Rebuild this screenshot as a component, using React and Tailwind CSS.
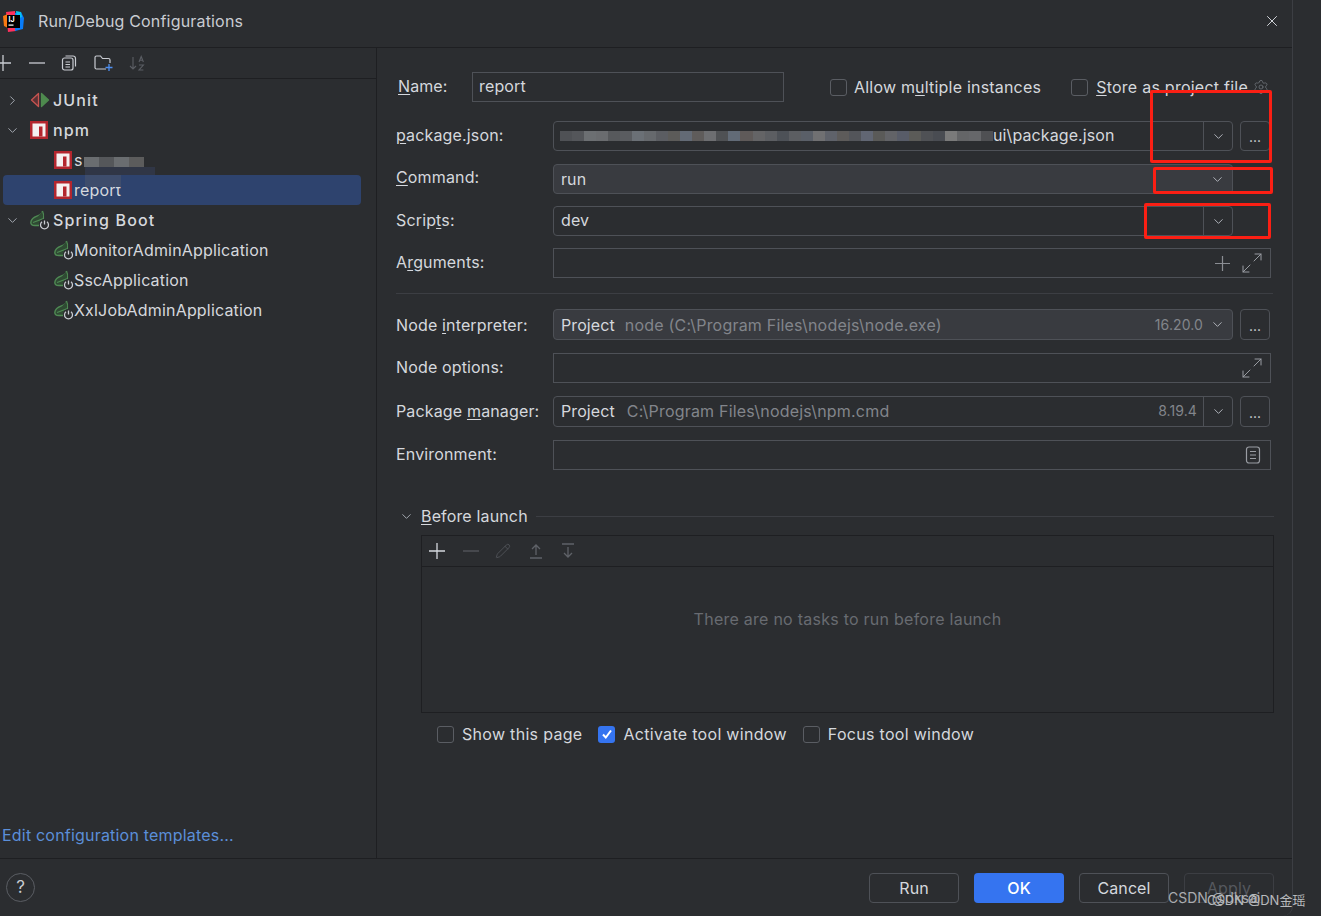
import { X, ChevronDown, ChevronRight, Settings, Maximize2, Pencil } from 'lucide-react';

const ui = "font-['Inter','Liberation_Sans',sans-serif]";

// pixelated patch that hides the path in the package.json field
const pathMosaic = ['#4f5155', '#54565a', '#6c6f72', '#6a6c6f', '#57595c', '#5a5c60', '#6b7076', '#66696d', '#5b5d62', '#5c5b59', '#636a75', '#5f5c5b', '#6d6e71', '#4f5154', '#626b77', '#5f5a59', '#646466', '#5c5e62', '#4d5157', '#5c5e62', '#5a5f68', '#707072', '#5f626a', '#5d5b5a', '#53555a', '#616673', '#5a5a58', '#626367', '#585c68', '#5b5b58', '#4f5155', '#494c52', '#7a7a7a', '#646567', '#66676a', '#4f5053'];

function LinePlus({ size = 16, color = '#c9ccd2', className = '' }) {
    return (
        <svg width={size} height={size} viewBox="0 0 16 16" fill="none" stroke={color} strokeWidth="1.300" className={`shrink-0 ${className}`}>
            <path d="M8 0v16M0 8h16" />
        </svg>
    );
}

function LineMinus({ color = '#c9ccd2', className = '' }) {
    return (
        <svg width="16" height="16" viewBox="0 0 16 16" fill="none" stroke={color} strokeWidth="1.300" className={`shrink-0 ${className}`}>
            <path d="M0 8h16" />
        </svg>
    );
}

function NpmIcon() {
    return (
        <svg width="18" height="18" viewBox="0 0 18 18" className="shrink-0">
            <rect width="18" height="18" fill="#b3262e" />
            <rect x="2.500" y="2.500" width="13" height="13" fill="#f4f1f1" />
            <rect x="9" y="5.500" width="3.500" height="10" fill="#b3262e" />
        </svg>
    );
}

function JunitIcon() {
    return (
        <svg width="20" height="16" viewBox="0 0 20 16" fill="none" className="shrink-0">
            <path d="M8.500 1.500 1.500 8l7 6.500z" fill="#5b3034" stroke="#c75450" strokeWidth="1.300" strokeLinejoin="round" />
            <path d="M11.500 1.500 18.500 8l-7 6.500z" fill="#4e8a4e" stroke="#4e8a4e" strokeWidth="1.300" strokeLinejoin="round" />
        </svg>
    );
}

function SpringIcon() {
    return (
        <svg width="20" height="20" viewBox="0 0 20 20" fill="none" className="shrink-0">
            <path d="M12.500 1C12 4 10 5 7.500 5.800 4 7 1 9.500.8 12.500c0 2 1.700 3 4 3H9" fill="#2f4a33" stroke="#4f8a54" strokeWidth="1.400" />
            <path d="M12.500 1c1 2 1.500 4.500 1 7.500L3 12.500" fill="#2f4a33" stroke="#4f8a54" strokeWidth="1.200" />
            <circle cx="14.500" cy="14.500" r="5.500" fill="#2b2d30" />
            <path d="M12 11.800a4 4 0 1 0 5 0" stroke="#c9ccd2" strokeWidth="1.300" />
            <path d="M14.500 10.500v4" stroke="#c9ccd2" strokeWidth="1.300" />
        </svg>
    );
}

function TreeRow({ icon, label, chevron, indent, bold, selected }) {
    return (
        <div className={`relative flex items-center h-[30px] ${indent ? 'pl-[54px]' : 'pl-[30px]'}`}>
            {selected && <div className="absolute left-[3px] right-[15px] top-0 bottom-0 rounded-[4px] bg-[#2e436e]" />}
            {chevron === 'right' && <ChevronRight size={15} strokeWidth={1.5} className="absolute left-[5px] text-[#a8adb5]" />}
            {chevron === 'down' && <ChevronDown size={15} strokeWidth={1.5} className="absolute left-[5px] text-[#a8adb5]" />}
            <span className="relative flex items-center">
                <span className={`flex items-center ${indent ? 'w-[20px]' : 'w-[23px]'}`}>{icon}</span>
                <span className={`text-[16px] text-[#d5d8dd] ${bold ? 'tracking-[1.15px] font-medium' : 'tracking-[0.18px]'}`}>{label}</span>
            </span>
        </div>
    );
}

function Sidebar() {
    return (
        <aside className="w-[377px] shrink-0 border-r border-[#1e1f22] flex flex-col">
            <div className="h-[31px] border-b border-[#1e1f22] flex items-center text-[#c9ccd2] overflow-hidden">
                <LinePlus className="-ml-[5px]" />
                <LineMinus className="ml-[18px]" />
                <svg width="16" height="16" viewBox="0 0 16 16" fill="none" stroke="#c9ccd2" strokeWidth="1.200" className="ml-[16px] shrink-0">
                    <rect x="1.500" y="3" width="10.500" height="12" rx="2" />
                    <path d="M4.500 1h7.500a2.500 2.500 0 0 1 2.500 2.500v8" />
                    <path d="M4.500 7h4.500M4.500 9.500h4.500M4.500 12h4.500" />
                </svg>
                <svg width="20" height="18" viewBox="0 0 20 18" fill="none" className="ml-[17px] shrink-0">
                    <path d="M1 14V3.500A1.500 1.500 0 0 1 2.500 2h4l2 2.500h6A1.500 1.500 0 0 1 16 6v3M12 15H2.500A1.500 1.500 0 0 1 1 13.500" stroke="#c9ccd2" strokeWidth="1.200" />
                    <path d="M15 10v7M11.500 13.500h7" stroke="#4d8ef0" strokeWidth="1.300" />
                </svg>
                <svg width="18" height="18" viewBox="0 0 18 18" fill="none" stroke="#5b5e64" strokeWidth="1.100" className="ml-[14px] shrink-0">
                    <path d="M5 3v12M2 12l3 3 3-3" />
                    <path d="M11 8l2.200-5.500L15.400 8M11.800 6.200h2.800M11 11h4.400L11 16h4.400" />
                </svg>
            </div>
            <div className="pt-[6px]">
                <TreeRow icon={<JunitIcon />} label="JUnit" chevron="right" bold />
                <TreeRow icon={<NpmIcon />} label="npm" chevron="down" bold />
                <TreeRow icon={<NpmIcon />} label="s" indent />
                <TreeRow icon={<NpmIcon />} label="report" indent selected />
                <TreeRow icon={<SpringIcon />} label="Spring Boot" chevron="down" bold />
                <TreeRow icon={<SpringIcon />} label="MonitorAdminApplication" indent />
                <TreeRow icon={<SpringIcon />} label="SscApplication" indent />
                <TreeRow icon={<SpringIcon />} label="XxlJobAdminApplication" indent />
            </div>
            <a className="mt-auto mb-[11px] ml-[2px] text-[16px] tracking-[0.2px] text-[#5b8fd9]">Edit configuration templates...</a>
        </aside>
    );
}

function Label({ pre, u, post, pb = 'pb-[2px]' }) {
    return (
        <div className={`w-[157px] shrink-0 ${pb} text-[16px] tracking-[0.15px] text-[#d5d8dd]`}>
            {pre}
            <span className="underline underline-offset-2">{u}</span>
            {post}
        </div>
    );
}

function Caret({ divider }) {
    return (
        <div className={`w-[29px] self-stretch flex items-center justify-center ${divider ? 'border-l border-[#4e5157]' : ''}`}>
            <ChevronDown size={15} strokeWidth={1.5} className="text-[#b4b8bf]" />
        </div>
    );
}

function DotsButton() {
    return (
        <div className="ml-[7px] w-[30px] self-stretch rounded-[4px] border border-[#4e5157] flex items-end justify-center pb-[4px] text-[14px] leading-[18px] text-[#d5d8dd]">
            ...
        </div>
    );
}

function ComboRow({ label, top, h = 'h-[30px]', filled, caretDivider, dots, children }) {
    return (
        <div className={`flex items-center ${top}`}>
            {label}
            <div className={`${h} w-[680px] flex items-center rounded-[4px] border border-[#4e5157] ${filled ? 'bg-[#393b40]' : ''}`}>
                <div className={`flex-1 min-w-0 flex items-center pl-[7px] text-[16px] tracking-[0.1px] text-[#d5d8dd] ${filled ? '' : 'pb-[2px]'}`}>{children}</div>
                <Caret divider={caretDivider} />
            </div>
            {dots && <DotsButton />}
        </div>
    );
}

function TextRow({ label, top, children }) {
    return (
        <div className={`flex items-center ${top}`}>
            {label}
            <div className="h-[30px] w-[718px] flex items-center justify-end gap-[13px] pr-[9px] border border-[#4e5157]">{children}</div>
        </div>
    );
}

function Expand() {
    return <Maximize2 size={24} strokeWidth={1} className="-mx-[3px] text-[#9a9da3]" />;
}

function Check({ label, checked, ml }) {
    return (
        <div className={`flex items-center gap-[8px] ${ml}`}>
            {checked ? (
                <div className="w-[17px] h-[17px] rounded-[3px] bg-[#3574f0] flex items-center justify-center">
                    <svg width="12" height="12" viewBox="0 0 12 12" fill="none">
                        <path d="M2 6.500 4.800 9.500 10 2.500" stroke="#fff" strokeWidth="2" />
                    </svg>
                </div>
            ) : (
                <div className="w-[17px] h-[17px] rounded-[3px] border border-[#5a5d63]" />
            )}
            <span className="text-[16px] tracking-[0.3px] text-[#d5d8dd]">{label}</span>
        </div>
    );
}

function ConfigForm() {
    return (
        <section className="flex-1 min-w-0 pl-[19px]">
            <div className="flex items-center pt-[24px] h-[54px]">
                <div className="w-[76px] shrink-0 pl-[2px] pb-[2px] text-[16px] tracking-[0.1px] text-[#d5d8dd]">
                    <span className="underline underline-offset-2">N</span>ame:
                </div>
                <div className="h-[30px] w-[312px] flex items-center pl-[6px] pb-[2px] border border-[#4e5157] text-[16px] tracking-[0.15px] text-[#d5d8dd]">report</div>
                <div className="ml-[46px] flex items-center gap-[7px]">
                    <div className="w-[17px] h-[17px] rounded-[3px] border border-[#5a5d63]" />
                    <span className="text-[16px] tracking-[0.2px] text-[#d5d8dd]">Allow m<span className="underline underline-offset-2">u</span>ltiple instances</span>
                </div>
                <div className="ml-[30px] flex items-center gap-[8px]">
                    <div className="w-[17px] h-[17px] rounded-[3px] border border-[#5a5d63]" />
                    <span className="text-[16px] tracking-[0.25px] text-[#d5d8dd] whitespace-nowrap"><span className="underline underline-offset-2">S</span>tore as project file</span>
                    <Settings size={16} strokeWidth={1.2} className="-ml-[3px] text-[#6f737a]" />
                </div>
            </div>

            <ComboRow label={<Label pre="" u="p" post="ackage.json:" />} top="mt-[19px]" caretDivider dots>
                <span className="w-[433px] h-[10px] mt-[2px] -ml-[1px] shrink-0 flex">
                    {pathMosaic.map((c, i) => (
                        <span key={i} className="flex-1" style={{ backgroundColor: c }} />
                    ))}
                </span>
                <span>ui\package.json</span>
            </ComboRow>
            <ComboRow label={<Label pre="" u="C" post="ommand:" pb="pb-[4px]" />} top="mt-[13px]" filled>run</ComboRow>
            <ComboRow label={<Label pre="Scrip" u="t" post="s:" />} top="mt-[12px]" caretDivider>dev</ComboRow>
            <TextRow label={<Label pre="A" u="r" post="guments:" />} top="mt-[12px]">
                <LinePlus size={15} color="#8a8d93" />
                <Expand />
            </TextRow>

            <div className="mt-[15px] h-px w-[877px] bg-[#3c3e43]" />

            <ComboRow label={<Label pre="Node " u="i" post="nterpreter:" pb="pb-0" />} top="mt-[15px]" h="h-[31px]" filled dots>
                <span>Project</span>
                <span className="ml-[10px] tracking-[0.2px] text-[#82858b]">node (C:\Program Files\nodejs\node.exe)</span>
                <span className="ml-auto text-[14px] text-[#82858b]">16.20.0</span>
            </ComboRow>
            <TextRow label={<Label pre="Node options:" u="" post="" />} top="mt-[13px]"><Expand /></TextRow>
            <ComboRow label={<Label pre="Package " u="m" post="anager:" />} top="mt-[13px]" h="h-[31px]" caretDivider dots>
                <span>Project</span>
                <span className="ml-[12px] tracking-[0.2px] text-[#82858b]">C:\Program Files\nodejs\npm.cmd</span>
                <span className="ml-auto mr-[6px] text-[14px] text-[#82858b]">8.19.4</span>
            </ComboRow>
            <TextRow label={<Label pre="Environment:" u="" post="" />} top="mt-[13px]">
                <svg width="16" height="18" viewBox="0 0 16 18" fill="none" stroke="#9a9da3" strokeWidth="1.200">
                    <rect x="1.500" y="1" width="13" height="16" rx="2.500" />
                    <path d="M5 5.500h6M5 9h6M5 12.500h6" />
                </svg>
            </TextRow>

            <div className="mt-[36px] flex items-center h-[20px] pl-[3px]">
                <ChevronDown size={15} strokeWidth={1.5} className="text-[#a8adb5]" />
                <span className="ml-[7px] text-[16px] tracking-[0.15px] text-[#d5d8dd]"><span className="underline underline-offset-2">B</span>efore launch</span>
                <div className="ml-[8px] h-px w-[738px] bg-[#3c3e43]" />
            </div>

            <div className="mt-[9px] ml-[25px] w-[853px] h-[178px] border border-[#1e1f22] flex flex-col">
                <div className="h-[31px] shrink-0 border-b border-[#1e1f22] flex items-center pl-[7px]">
                    <LinePlus color="#d5d8dd" />
                    <LineMinus color="#55585e" className="ml-[18px]" />
                    <Pencil size={16} strokeWidth={1.2} className="ml-[16px] text-[#55585e]" />
                    <svg width="18" height="18" viewBox="0 0 18 18" fill="none" stroke="#5f6268" strokeWidth="1.300" className="ml-[16px]">
                        <path d="M9 13V3M5 7l4-4 4 4M3 16h12" />
                    </svg>
                    <svg width="18" height="18" viewBox="0 0 18 18" fill="none" stroke="#5f6268" strokeWidth="1.300" className="ml-[14px]">
                        <path d="M9 5v10M5 11l4 4 4-4M3 2h12" />
                    </svg>
                </div>
                <div className="flex-1 flex items-center justify-center pb-[42px] text-[16px] tracking-[0.25px] text-[#686b71]">
                    There are no tasks to run before launch
                </div>
            </div>

            <div className="mt-[9px] ml-[41px] flex items-center">
                <Check label="Show this page" />
                <Check label="Activate tool window" checked ml="ml-[16px]" />
                <Check label="Focus tool window" ml="ml-[16px]" />
            </div>
        </section>
    );
}

function Footer() {
    const btn = "h-[30px] w-[90px] rounded-[4px] flex items-center justify-center text-[16px] tracking-[0.1px]";
    return (
        <footer className="h-[58px] border-t border-[#1e1f22] flex items-center pl-[6px] pr-[18px]">
            <div className="w-[29px] h-[29px] rounded-full border border-[#5a5d63] flex items-center justify-center text-[17px] text-[#c9ccd2]">?</div>
            <div className="ml-auto flex items-center gap-[15px]">
                <div className={`${btn} border border-[#4e5157] text-[#d5d8dd]`}>Run</div>
                <div className={`${btn} bg-[#3574f0] text-white font-medium`}>OK</div>
                <div className={`${btn} border border-[#4e5157] text-[#d5d8dd]`}>Cancel</div>
                <div className={`${btn} border border-[#3c3e43] text-[#55585e]`}>Apply</div>
            </div>
        </footer>
    );
}

export default function App() {
    const annotations = [
        'left-[1150px] top-[90px] w-[122px] h-[73px]',
        'left-[1153px] top-[167px] w-[120px] h-[27px]',
        'left-[1144px] top-[203px] w-[127px] h-[36px]',
    ];

    return (
        <div className={`relative w-[1321px] h-[916px] overflow-hidden bg-[#2b2d30] ${ui}`}>
            <div className="w-[1293px] h-[916px] border-r border-[#3c3e43] rounded-br-[10px] flex flex-col">
                <header className="h-[48px] shrink-0 pb-[5px] border-b border-[#1e1f22] flex items-center pl-[3px] pr-[11px]">
                    <svg width="21" height="21" viewBox="0 0 21 21" className="shrink-0">
                        <path d="M3 1 12 0l1 20-8 1z" fill="#fe315d" />
                        <path d="M0 5l5-2v14l-4-2z" fill="#f97a12" />
                        <path d="M12 2l6-1 3 6-1 11-8 2z" fill="#087cfa" />
                        <path d="M13 0l5 1 1 5-5 2z" fill="#07c3f2" />
                        <rect x="4" y="4" width="13" height="13" fill="#000" />
                        <text x="5.500" y="10.500" fontSize="7" fontWeight="700" fill="#fff">IJ</text>
                        <rect x="5.500" y="13.500" width="5" height="1.200" fill="#fff" />
                    </svg>
                    <span className="ml-[14px] text-[16px] tracking-[0.18px] text-[#c9ccd2]">Run/Debug Configurations</span>
                    <X size={18} strokeWidth={1.3} className="ml-auto text-[#d5d8dd]" />
                </header>
                <div className="flex-1 min-h-0 flex">
                    <Sidebar />
                    <ConfigForm />
                </div>
                <Footer />
            </div>

            {/* red boxes drawn on top of the screenshot */}
            {annotations.map((a) => (
                <div key={a} className={`absolute ${a} border-[3px] border-[#fb1f14] rounded-[2px]`} />
            ))}

            {/* blurred name over the tree */}
            <div className="absolute left-[84px] top-[157px] w-[60px] h-[10px] flex">
                <div className="flex-1 bg-[#6a6d70]" />
                <div className="flex-1 bg-[#55575a]" />
                <div className="flex-1 bg-[#6a6d70]" />
                <div className="flex-1 bg-[#5c5c5c]" />
            </div>
            <div className="absolute left-[85px] top-[167px] w-[70px] h-[8px] bg-[#303646]" />
            <div className="absolute left-[85px] top-[175px] w-[36px] h-[12px] bg-[#3e4d6c]" />

            <div className="absolute left-[1168px] top-[887px] text-[14px] text-[#a9abaf]">CSDN @dksaj</div>
            <div className="absolute left-[1207px] top-[891px] text-[13px] text-[#b8babd] font-['Inter','Noto_Sans_CJK_SC',sans-serif]">CSDN @DN金瑶</div>
        </div>
    );
}
